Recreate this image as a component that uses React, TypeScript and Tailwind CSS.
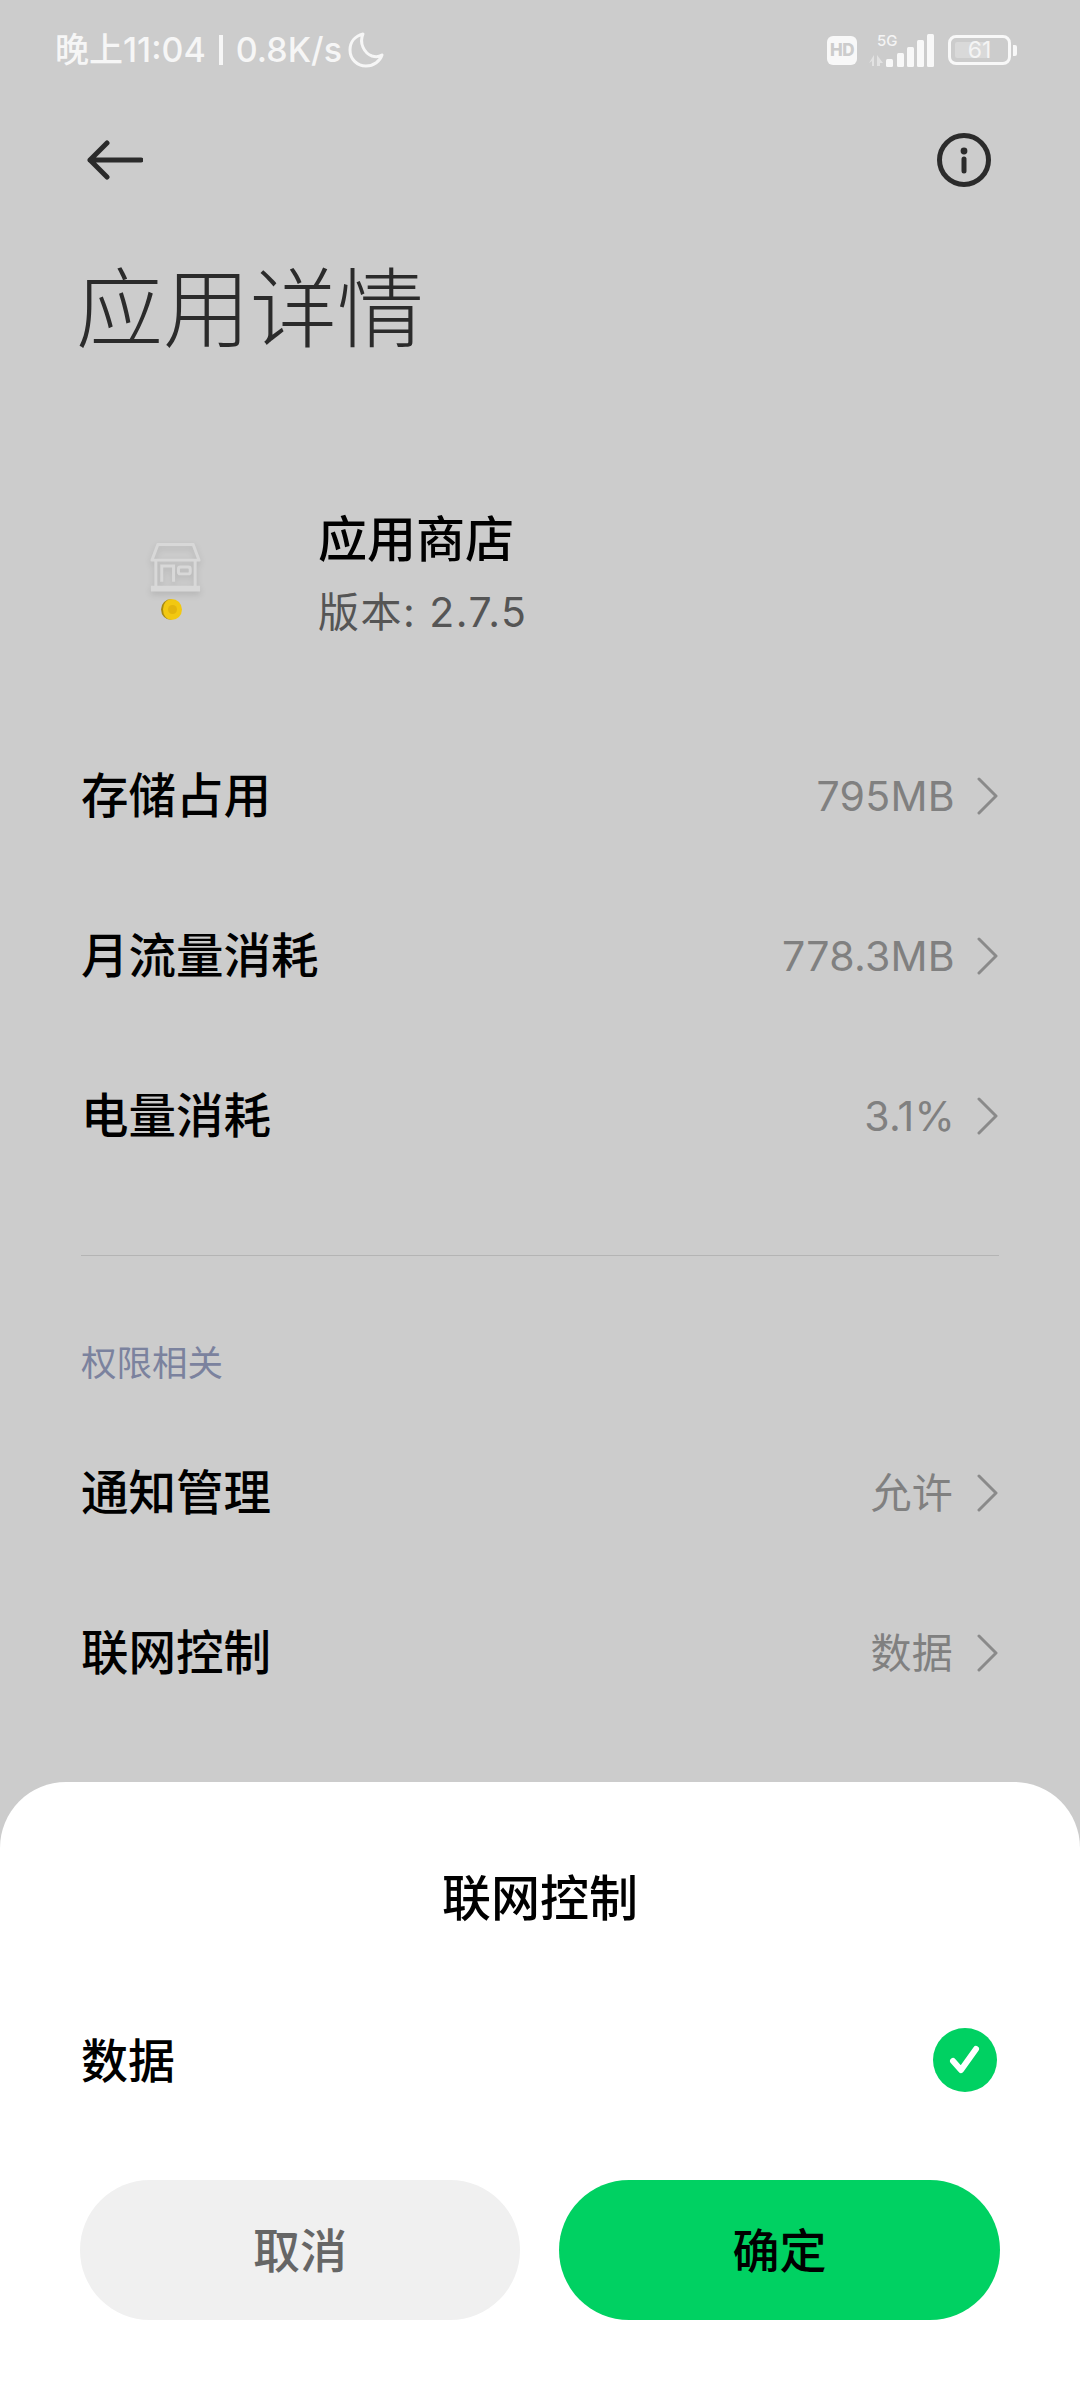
const FONT = "font-['Inter','Noto_Sans_CJK_SC',sans-serif]";

function StatusIcons() {
  return (
    <div className="flex items-center">
      <div className="flex h-[29px] w-[30px] items-center justify-center rounded-[6px] bg-[#f8f8f8]">
        <span className="text-[17px] font-extrabold leading-none tracking-[-0.5px] text-[#cccccc]">HD</span>
      </div>
      <svg width="70" height="36" viewBox="0 0 70 36" className="ml-[11px]">
        <text x="9" y="14" fontSize="15" fontWeight="500" fill="#f4f4f4" fontFamily="Inter">5G</text>
        <path d="M1 31L6 23V34H4V29ZM9 23L15 31H12V34H9Z" fill="#e2e2e2" />
        <rect x="18" y="27" width="7" height="8" rx="1.5" fill="#f8f8f8" />
        <rect x="29" y="21" width="7" height="14" rx="1.5" fill="#f8f8f8" />
        <rect x="39" y="15" width="7" height="20" rx="1.5" fill="#f8f8f8" />
        <rect x="49" y="8" width="7" height="27" rx="1.5" fill="#f8f8f8" />
        <rect x="59" y="2" width="7" height="33" rx="1.5" fill="#f8f8f8" />
      </svg>
      <div className="relative ml-[10px] flex h-[30px] w-[63px] items-center justify-center rounded-[8px] border-[3px] border-[#f8f8f8]">
        <div className="absolute bottom-[4px] left-[4px] top-[4px] w-[33px] rounded-[2px] bg-[#d9d9d9]" />
        <span className="relative text-[23px] leading-none text-[#f4f4f4]">61</span>
      </div>
      <div className="ml-[2px] h-[11px] w-[4px] rounded-r-[2px] bg-[#f8f8f8]" />
    </div>
  );
}

function Chevron() {
  return (
    <svg width="21" height="38" viewBox="0 0 21 38" fill="none" stroke="#8a8a8a" strokeWidth="3" strokeLinecap="round" strokeLinejoin="round" className="ml-[22px] mr-[1px]">
      <path d="M2 2L19 19L2 36" />
    </svg>
  );
}

function Row({ title, value, cjk }: { title: string; value: string; cjk?: boolean }) {
  return (
    <div className="flex h-[160px] items-center justify-between">
      <span className="text-[47.5px] font-medium leading-none text-black">{title}</span>
      <div className="flex items-center">
        <span className={cjk ? "mr-[2px] text-[41px] leading-none tracking-[0.3px] text-[#808080]" : "text-[41px] leading-none tracking-[0.3px] text-[#808080]"}>{value}</span>
        <Chevron />
      </div>
    </div>
  );
}

function StoreIcon() {
  return (
    <div className="flex h-[100px] w-[56px] flex-col items-center">
      <svg width="55" height="56" viewBox="0 0 56 56" fill="none" stroke="#d8d8d8" strokeWidth="3" className="blur-[0.5px] drop-shadow-[0_3px_3px_rgba(0,0,0,0.12)]">
        <path d="M10 4H46L52 20H4Z" strokeLinejoin="round" />
        <path d="M8 20V48M48 20V48" />
        <path d="M3 49H53" strokeWidth="6" />
        <path d="M14 42V26H26V42" />
        <rect x="31" y="27" width="12" height="7" rx="2" />
      </svg>
      <div className="mr-[7px] mt-[3px] flex h-[21px] w-[21px] items-center justify-center rounded-full border-l-[2px] border-[#a98a10] bg-[#f2c811]">
        <div className="h-[9px] w-[9px] rounded-full bg-[#e3b50c]" />
      </div>
    </div>
  );
}

export default function App() {
  return (
    <div className={`${FONT} relative h-[2400px] w-[1080px] overflow-hidden bg-[#cccccc]`}>
      {/* Status bar */}
      <div className="flex h-[100px] items-center justify-between pl-[55px] pr-[63px]">
        <div className="flex items-center text-[#f6f6f6]">
          <span className="text-[34px] font-medium leading-none">晚上11:04</span>
          <div className="ml-[13px] h-[30px] w-[4px] bg-[#f6f6f6]" />
          <span className="ml-[13px] text-[34px] font-medium leading-none">0.8K/s</span>
          <svg width="36" height="36" viewBox="0 0 36 36" fill="none" stroke="#f6f6f6" strokeWidth="3" className="ml-[6px]">
            <path d="M15 2C7 4 2 10 2 18C2 27 9 34 18 34C26 34 32 29 34 23C31 25 27 25 24 24C16 21 11 11 15 2Z" strokeLinejoin="round" />
          </svg>
        </div>
        <StatusIcons />
      </div>

      {/* Toolbar */}
      <div className="flex h-[120px] items-center justify-between pl-[87px] pr-[89px]">
        <svg width="56" height="40" viewBox="0 0 56 40" fill="none" stroke="#2b2b2b" strokeWidth="5" strokeLinecap="round" strokeLinejoin="round">
          <path d="M54 20H3M20 3L3 20L20 37" />
        </svg>
        <svg width="54" height="54" viewBox="0 0 54 54" fill="none" stroke="#2b2b2b">
          <circle cx="27" cy="27" r="24.5" strokeWidth="5" />
          <circle cx="27" cy="18" r="3.4" fill="#2b2b2b" stroke="none" />
          <path d="M27 26V38" strokeWidth="5" strokeLinecap="round" />
        </svg>
      </div>

      <h1 className="mt-[40px] pl-[76px] text-[87px] font-light leading-[100px] text-[#2b2b2b]">应用详情</h1>

      {/* App header */}
      <div className="ml-[147px] mt-[180px] flex items-start">
        <div>
          <StoreIcon />
        </div>
        <div className="ml-[115px] flex flex-col">
          <span className="mt-[-32px] text-[49px] font-medium leading-[64px] text-black">应用商店</span>
          <span className="mt-[8px] text-[41px] leading-[64px] tracking-[1.5px] text-[#555555]">版本: 2.7.5</span>
        </div>
      </div>

      <div className="mx-[81px] mt-[72px]">
        <Row title="存储占用" value="795MB" />
        <Row title="月流量消耗" value="778.3MB" />
        <Row title="电量消耗" value="3.1%" />
        <div className="mt-[59px] h-px bg-[#b4b4b4]" />
        <div className="mt-[90px] text-[35.5px] leading-[36px] text-[#7b829e]">权限相关</div>
        <div className="mt-[31px]">
          <Row title="通知管理" value="允许" cjk />
          <Row title="联网控制" value="数据" cjk />
        </div>
      </div>

      {/* Bottom sheet */}
      <div className="absolute inset-x-0 bottom-0 h-[618px] rounded-t-[66px] bg-white px-[80px]">
        <div className="flex h-[232px] items-center justify-center text-[49px] font-medium leading-none text-black">联网控制</div>
        <div className="flex h-[92px] items-center justify-between pr-[3px]">
          <span className="pl-[1px] text-[47px] font-medium leading-none text-black">数据</span>
          <div className="flex h-[64px] w-[64px] items-center justify-center rounded-full bg-[#00d162]">
            <svg width="34" height="30" viewBox="0 0 34 30" fill="none" stroke="white" strokeWidth="6" strokeLinecap="round" strokeLinejoin="round">
              <path d="M5 16L13 25L28 4" />
            </svg>
          </div>
        </div>
        <div className="mt-[74px] flex justify-between">
          <button className="h-[140px] w-[440px] rounded-[70px] bg-[#f0f0f0] pt-[2px] text-[47px] font-medium text-[#666666]">取消</button>
          <button className="h-[140px] w-[441px] rounded-[70px] bg-[#00d162] pt-[2px] text-[47px] font-medium text-black">确定</button>
        </div>
      </div>
    </div>
  );
}
